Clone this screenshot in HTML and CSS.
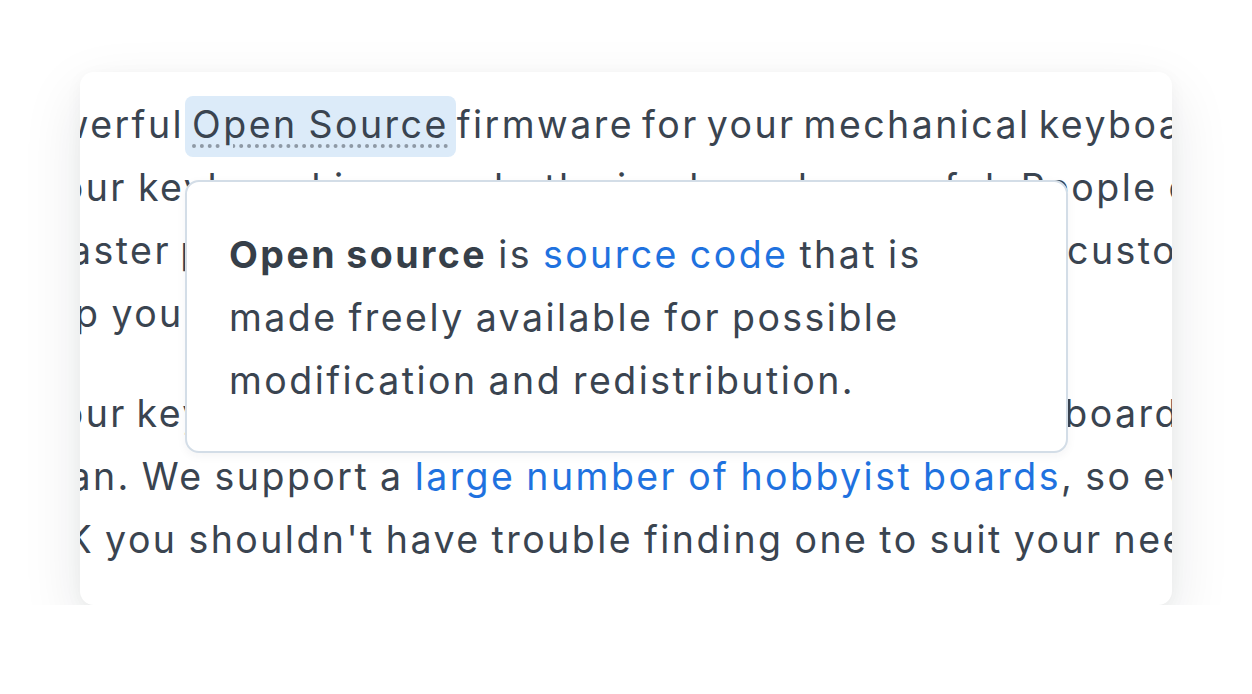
FILE: index.html
```html
<!DOCTYPE html>
<html lang="en">
<head>
<meta charset="utf-8">
<title>Open Source tooltip</title>
<link rel="stylesheet" href="styles.css">
</head>
<body>
<main class="card">
  <p class="para">
    <span class="line line--1">powerful <span class="term">Open Source</span> firmware for your mechanical keyboard. You can use</span>
    <span class="line line--2">your keyboard in ways both simple and powerful. People of all skill levels</span>
    <span class="line line--3">master programmer, have successfully used QMK to customize their keyboard.</span>
    <span class="line line--4">help you do the same.</span>
  </p>
  <p class="para">
    <span class="line line--5">your keyboard can run QMK? If it's a mechanical keyboard you built yourself</span>
    <span class="line line--6">plan. We support a <a class="link" href="#">large number of hobbyist boards</a>, so even if your current</span>
    <span class="line line--7">QMK you shouldn't have trouble finding one to suit your needs.</span>
  </p>
  <div class="tooltip" role="tooltip">
    <strong class="tooltip__term">Open source</strong> is <a class="link" href="#">source code</a> that is made freely available for possible modification and redistribution.
  </div>
</main>
</body>
</html>
```
FILE: styles.css
```css
html, body {
  margin: 0;
  padding: 0;
  background: #ffffff;
}

body {
  font-family: Inter, "Noto Sans", sans-serif;
  color: #3a4450;
  padding-top: 72px;
  letter-spacing: 2.45px;
  word-spacing: -2px;
}

.card {
  position: relative;
  box-sizing: border-box;
  width: 1092px;
  height: 533px;
  margin: 0 auto;
  padding-top: 21px;
  background: #ffffff;
  border-radius: 14px;
  overflow: hidden;
  box-shadow: 0 22px 60px rgba(20, 25, 35, 0.1), 0 4px 18px rgba(20, 25, 35, 0.04);
}

.para {
  margin: 0 0 37px;
  font-size: 37.5px;
  line-height: 63px;
}

.line {
  display: block;
  white-space: nowrap;
}

.line--1 { margin-left: -72px; word-spacing: -5px; }
.line--2 { margin-left: -42px; }
.line--3 { margin-left: -45.3px; word-spacing: -3.7px; }
.line--4 { margin-left: -65.5px; }
.line--5 { margin-left: -42px; word-spacing: -3.4px; }
.line--6 { margin-left: -47.5px; }
.line--7 { margin-left: -81px; }

.term {
  background: #dcebf9;
  border-radius: 8px;
  padding: 6px 7.5px 10px;
  margin: 0 -7.5px;
  word-spacing: -2px;
  text-decoration: underline dotted #8e99a5;
  text-decoration-thickness: 3.5px;
  text-underline-offset: 5.5px;
}

.link {
  color: #1f72df;
  text-decoration: none;
}

.tooltip {
  position: absolute;
  left: 105px;
  top: 108px;
  box-sizing: border-box;
  width: 883px;
  padding: 41px 80px 39px 42px;
  background: #ffffff;
  border: 2px solid #d3dde7;
  border-radius: 14px;
  box-shadow: 0 3px 10px rgba(30, 40, 60, 0.05);
  font-size: 37.5px;
  line-height: 63px;
}

.tooltip__term {
  font-weight: 700;
  color: #363f49;
}
```
